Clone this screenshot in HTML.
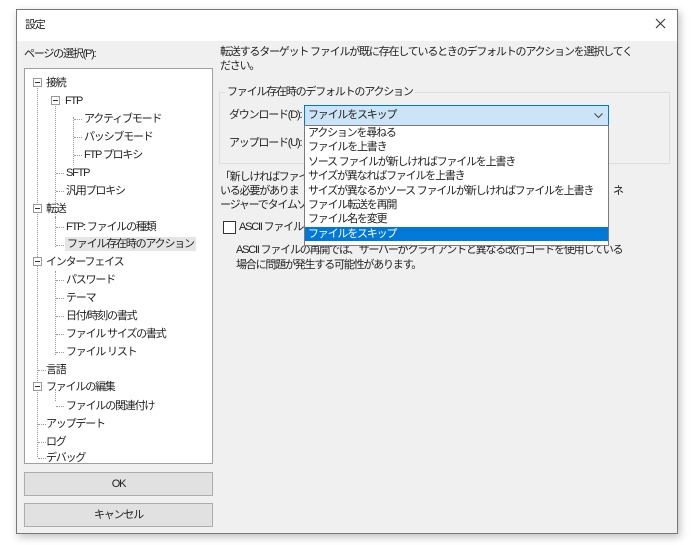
<!DOCTYPE html>
<html><head><meta charset="utf-8"><style>
*{margin:0;padding:0;box-sizing:border-box}
body{width:694px;height:545px;background:#fff;position:relative;overflow:hidden;font-family:"Liberation Sans","Noto Sans CJK JP",sans-serif;font-size:11px;letter-spacing:-1.2px;color:#222}
.win{position:absolute;left:16px;top:9px;width:662px;height:525px;border:1px solid #777;background:#f0f0f0;box-shadow:2px 3px 8px rgba(0,0,0,.25)}
.title{position:absolute;left:0;top:0;width:660px;height:31px;background:#fff}
.a{position:absolute;white-space:nowrap;line-height:14px}
.tree{position:absolute;left:7px;top:58px;width:189px;height:396px;background:#fff;border:1px solid #a0a0a0;overflow:hidden}
.btn{position:absolute;left:7px;width:189px;height:24px;background:#e1e1e1;border:1px solid #adadad;text-align:center;line-height:22px}
.box{position:absolute;width:9px;height:9px;border:1px solid #999;background:#fff}
.box:after{content:"";position:absolute;left:1px;top:3px;width:5px;height:1px;background:#333}
.vl{position:absolute;border-left:1px dotted #999}
.hl{position:absolute;border-top:1px dotted #999;width:8px}
.list{position:absolute;left:287px;top:115px;width:305px;height:121px;background:#fff;border:1px solid #7a7a7a}
.list div{height:14.4px;line-height:14.4px;padding-left:3px;white-space:nowrap}
</style></head><body>
<div class="win">
<div class="title"></div>
<div class="a" style="left:8px;top:8px">設定</div>
<svg style="position:absolute;left:638px;top:8px" width="11" height="11"><path d="M1 1L10 10M10 1L1 10" stroke="#333" stroke-width="1.1"/></svg>
<div class="a" style="left:7px;top:37px">ページの選択(P):</div>
<div class="tree">
<div class="vl" style="left:12px;top:14px;height:374px"></div>
<div class="vl" style="left:30px;top:30px;height:132px"></div>
<div class="vl" style="left:48px;top:48px;height:48px"></div>
<div class="vl" style="left:30px;top:148px;height:30px"></div>
<div class="vl" style="left:30px;top:202px;height:84px"></div>
<div class="vl" style="left:30px;top:320px;height:12px"></div>
<div class="box" style="left:8px;top:9px"></div>
<div class="box" style="left:26px;top:27px"></div>
<div class="box" style="left:8px;top:135px"></div>
<div class="box" style="left:8px;top:188px"></div>
<div class="box" style="left:8px;top:313px"></div>
<div class="a" style="left:21px;top:7px">接続</div>
<div class="a" style="left:40px;top:25px">FTP</div>
<div class="hl" style="left:49px;top:50px"></div><div class="a" style="left:59px;top:43px">アクティブモード</div>
<div class="hl" style="left:49px;top:68px"></div><div class="a" style="left:59px;top:61px">パッシブモード</div>
<div class="hl" style="left:49px;top:86px"></div><div class="a" style="left:59px;top:79px">FTP プロキシ</div>
<div class="hl" style="left:31px;top:104px"></div><div class="a" style="left:41px;top:97px">SFTP</div>
<div class="hl" style="left:31px;top:122px"></div><div class="a" style="left:41px;top:115px">汎用プロキシ</div>
<div class="a" style="left:21px;top:133px">転送</div>
<div class="hl" style="left:31px;top:158px"></div><div class="a" style="left:41px;top:151px">FTP: ファイルの種類</div>
<div class="hl" style="left:31px;top:176px"></div><div class="a" style="left:40px;top:168px;background:#e5e5e5;padding:0 2px">ファイル存在時のアクション</div>
<div class="a" style="left:21px;top:186px">インターフェイス</div>
<div class="hl" style="left:31px;top:211px"></div><div class="a" style="left:41px;top:204px">パスワード</div>
<div class="hl" style="left:31px;top:229px"></div><div class="a" style="left:41px;top:222px">テーマ</div>
<div class="hl" style="left:31px;top:247px"></div><div class="a" style="left:41px;top:240px">日付/時刻の書式</div>
<div class="hl" style="left:31px;top:265px"></div><div class="a" style="left:41px;top:258px">ファイル サイズの書式</div>
<div class="hl" style="left:31px;top:283px"></div><div class="a" style="left:41px;top:276px">ファイル リスト</div>
<div class="hl" style="left:13px;top:301px"></div><div class="a" style="left:21px;top:294px">言語</div>
<div class="a" style="left:21px;top:311px">ファイルの編集</div>
<div class="hl" style="left:31px;top:337px"></div><div class="a" style="left:41px;top:330px">ファイルの関連付け</div>
<div class="hl" style="left:13px;top:355px"></div><div class="a" style="left:21px;top:348px">アップデート</div>
<div class="hl" style="left:13px;top:373px"></div><div class="a" style="left:21px;top:366px">ログ</div>
<div class="hl" style="left:13px;top:389px"></div><div class="a" style="left:21px;top:382px">デバッグ</div>
</div>
<div class="btn" style="top:462px">OK</div>
<div class="btn" style="top:493px">キャンセル</div>

<div class="a" style="left:203px;top:35px">転送するターゲット ファイルが既に存在しているときのデフォルトのアクションを選択してく</div>
<div class="a" style="left:203px;top:49px">ださい。</div>
<div style="position:absolute;left:202px;top:82px;width:451px;height:72px;border:1px solid #dcdcdc"></div>
<div class="a" style="left:208px;top:75px;background:#f0f0f0;padding:0 2px">ファイル存在時のデフォルトのアクション</div>
<div class="a" style="left:212px;top:98px">ダウンロード(D):</div>
<div style="position:absolute;left:287px;top:95px;width:305px;height:21px;background:#cce4f7;border:1px solid #0078d7"></div>
<div class="a" style="left:291px;top:98px">ファイルをスキップ</div>
<svg style="position:absolute;left:577px;top:103px" width="9" height="6"><path d="M0.5 0.5L4.5 4.5L8.5 0.5" fill="none" stroke="#444" stroke-width="1"/></svg>
<div class="a" style="left:212px;top:126px">アップロード(U):</div>
<div class="a" style="left:203px;top:160px">「新しければファイル</div>
<div class="a" style="left:203px;top:174px">いる必要がありま</div>
<div class="a" style="left:203px;top:188px">ージャーでタイムゾー</div>
<div class="a" style="left:596px;top:174px">ネ</div>
<div style="position:absolute;left:206px;top:211px;width:13px;height:13px;border:1px solid #333;background:#fff"></div>
<div class="a" style="left:222px;top:210px">ASCII ファイルの</div>
<div class="a" style="left:219px;top:233px">ASCII ファイルの再開では、サーバーがクライアントと異なる改行コードを使用している</div>
<div class="a" style="left:219px;top:248px">場合に問題が発生する可能性があります。</div>
<div class="list">
<div>アクションを尋ねる</div><div>ファイルを上書き</div><div>ソース ファイルが新しければファイルを上書き</div><div>サイズが異なればファイルを上書き</div><div>サイズが異なるかソース ファイルが新しければファイルを上書き</div><div>ファイル転送を再開</div><div>ファイル名を変更</div><div style="background:#0078d7;color:#fff">ファイルをスキップ</div>
</div>
</div>
</body></html>
